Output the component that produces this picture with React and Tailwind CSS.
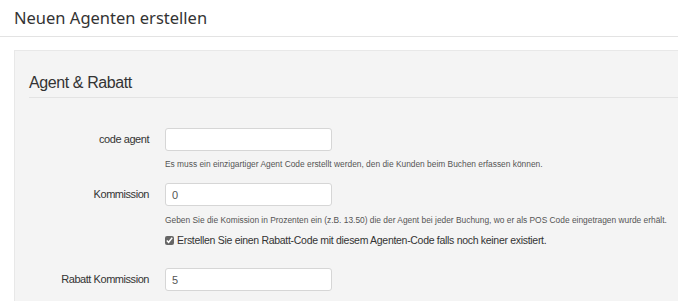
const FieldRow = ({ label, value, children }) => (
    <div className="flex">
        <div className="w-[121px] shrink-0 pr-[1px] text-right text-[11px] leading-[23px] text-[#333] tracking-[-0.45px]">
            {label}
        </div>
        <div className="ml-[15px] flex-1">
            <input
                type="text"
                defaultValue={value}
                className="block h-[23px] w-[167px] rounded-[3px] border border-[#d6d6d6] bg-white px-[6px] text-[11px] text-[#555] outline-none"
            />
            {children}
        </div>
    </div>
);

const App = () => {
    return (
        <div className="h-[301px] w-[678px] overflow-hidden bg-white font-['Liberation_Sans',Arial,sans-serif] text-[#333]">
            <div className="border-b border-[#e3e3e3]">
                <h1 className="h-[36px] pl-[14px] pt-[7px] font-['Noto_Sans',sans-serif] text-[16.5px] leading-[22px] text-[#333]">
                    Neuen Agenten erstellen
                </h1>
            </div>
            <div className="ml-[14px] mr-[-10px] mt-[13px] border border-[#e8e8e8] bg-[#f4f4f4] pl-[14px]">
                <div className="h-[47px] border-b border-[#e3e3e3] pt-[22px] text-[16px] leading-[20px] tracking-[-0.4px] text-[#333]">
                    Agent &amp; Rabatt
                </div>
                <div className="flex flex-col pt-[30px]">
                    <FieldRow label="code agent" value="">
                        <p className="mt-[7px] text-[8.4px] leading-[12px] text-[#555]">
                            Es muss ein einzigartiger Agent Code erstellt werden, den die Kunden beim Buchen erfassen können.
                        </p>
                    </FieldRow>
                    <div className="mt-[13px]">
                        <FieldRow label="Kommission" value="0">
                            <p className="mt-[8px] text-[8.4px] leading-[12px] text-[#555]">
                                Geben Sie die Komission in Prozenten ein (z.B. 13.50) die der Agent bei jeder Buchung, wo er als POS Code eingetragen wurde erhält.
                            </p>
                            <label className="mt-[7px] flex items-center gap-[3px] text-[10.5px] leading-[14px] tracking-[-0.3px] text-[#333]">
                                <input type="checkbox" defaultChecked className="m-0 h-[9px] w-[9px] accent-[#666]" />
                                Erstellen Sie einen Rabatt-Code mit diesem Agenten-Code falls noch keiner existiert.
                            </label>
                        </FieldRow>
                    </div>
                    <div className="mt-[21px]">
                        <FieldRow label="Rabatt Kommission" value="5" />
                    </div>
                </div>
                <div className="h-[20px]" />
            </div>
        </div>
    );
};

export default App;
